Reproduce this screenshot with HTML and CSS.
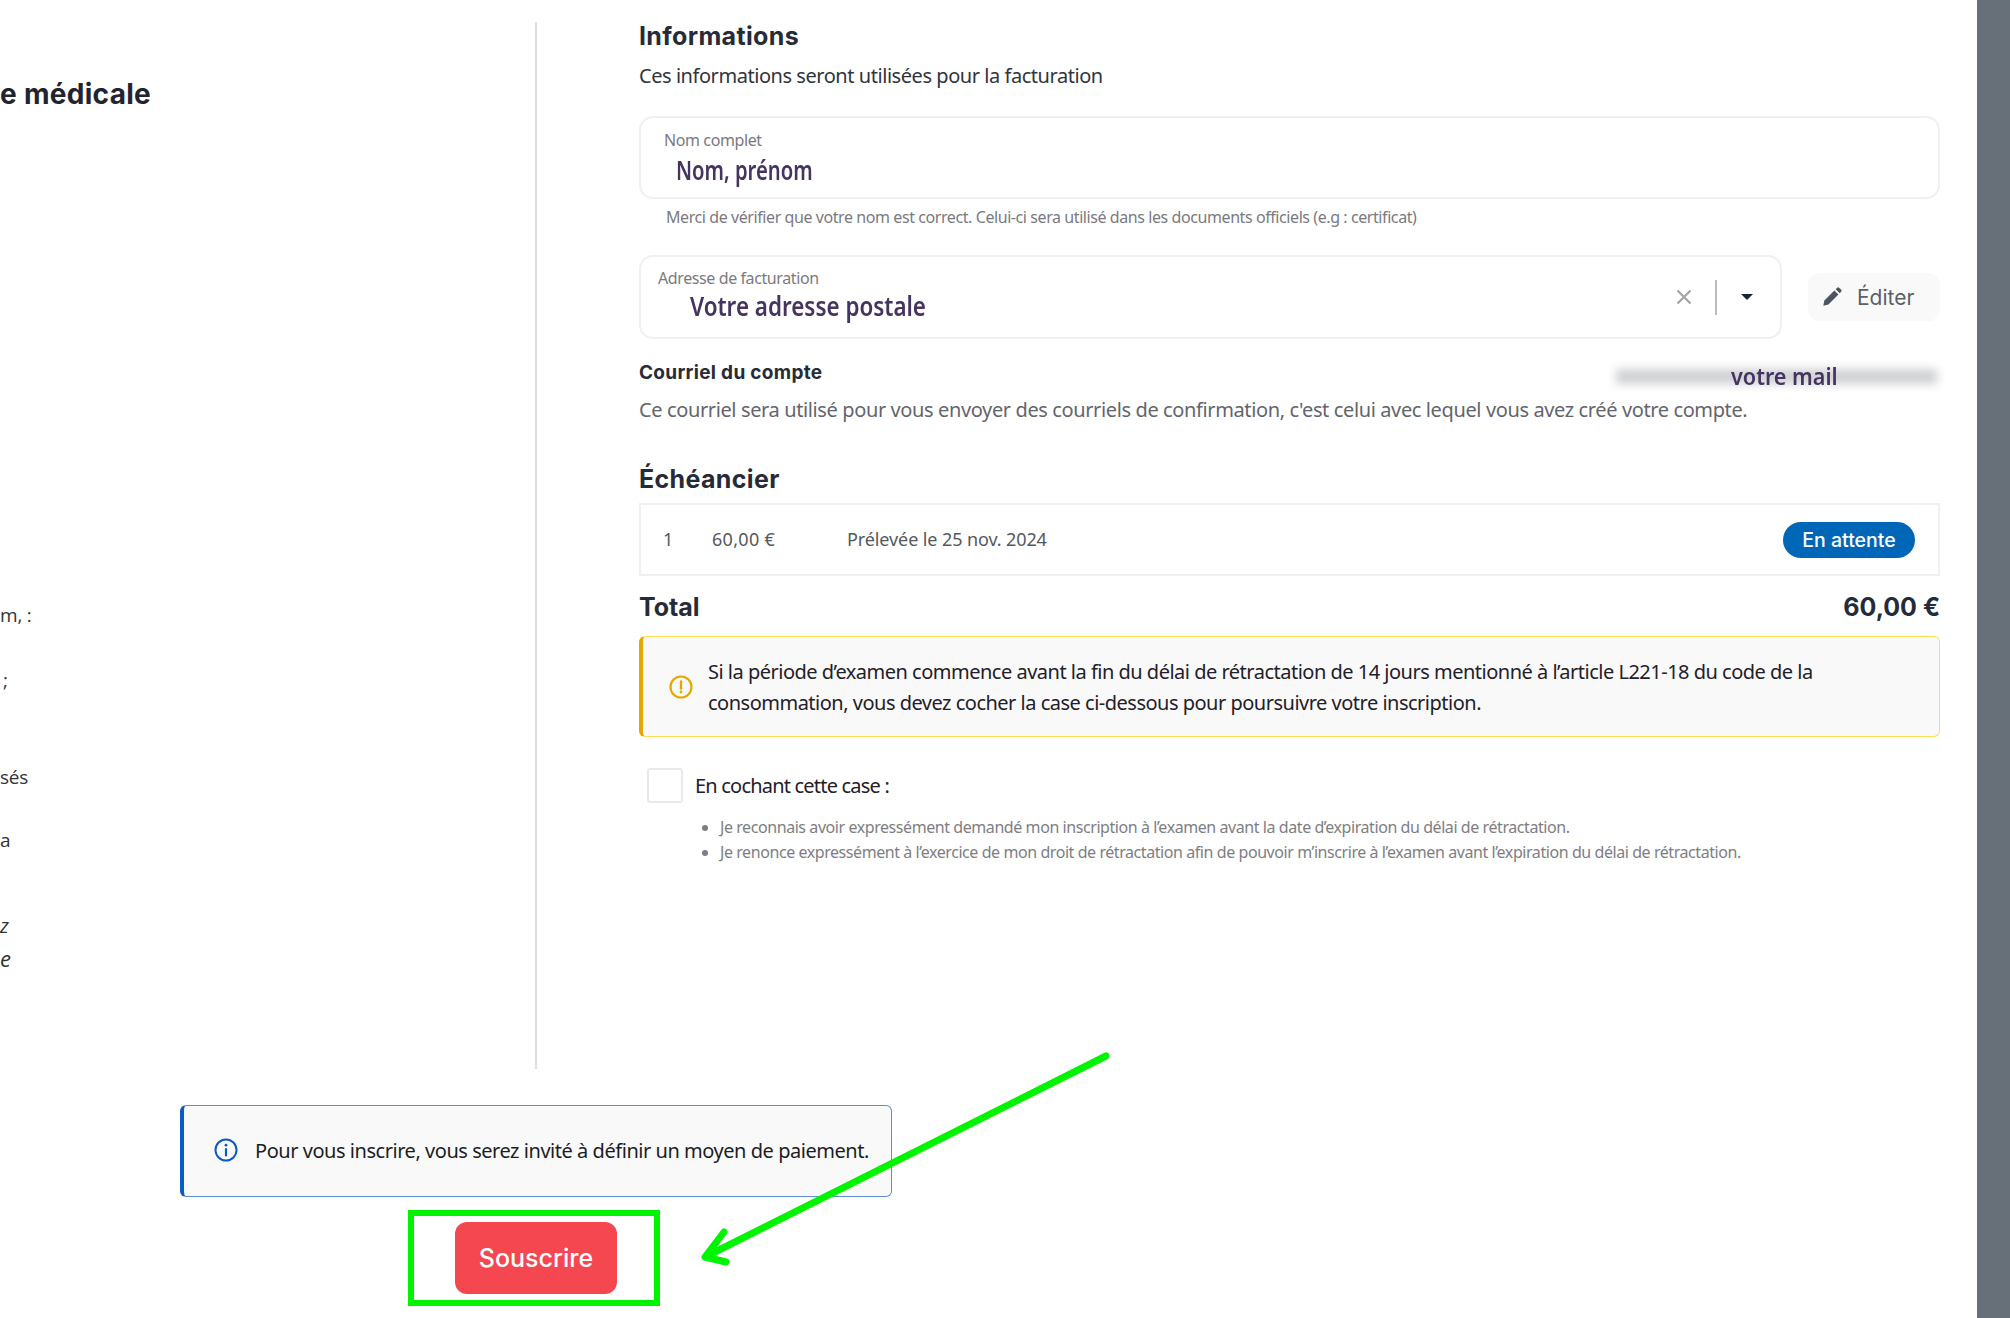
FILE: index.html
```html
<!DOCTYPE html>
<html lang="fr">
<head>
    <meta charset="UTF-8">
    <meta name="viewport" content="width=device-width, initial-scale=1.0">
    <title>Souscrire</title>
    <link rel="stylesheet" href="styles.css">
</head>
<body>
    <div class="page">
        <div class="columns">
            <div class="left-col">
                <h1 class="left-title">e médicale</h1>
                <p class="frag frag-1">m, :</p>
                <p class="frag frag-2">;</p>
                <p class="frag frag-3">sés</p>
                <p class="frag frag-4">a</p>
                <p class="frag frag-5"><em>z</em></p>
                <p class="frag frag-6"><em>e</em></p>
            </div>

            <div class="right-col">
                <h2 class="section-title">Informations</h2>
                <p class="subtitle">Ces informations seront utilisées pour la facturation</p>

                <div class="field field-name">
                    <div class="field-label">Nom complet</div>
                    <div class="hand-value value-name">Nom, prénom</div>
                </div>
                <p class="help">Merci de vérifier que votre nom est correct. Celui-ci sera utilisé dans les documents officiels (e.g : certificat)</p>

                <div class="address-row">
                    <div class="field field-address">
                        <div class="field-main">
                            <div class="field-label">Adresse de facturation</div>
                            <div class="hand-value value-address">Votre adresse postale</div>
                        </div>
                        <svg class="clear-icon" viewBox="0 0 16 16" width="16" height="16"><path d="M1.5 1.5l13 13M14.5 1.5l-13 13" stroke="#a6a7ab" stroke-width="2.4" fill="none"/></svg>
                        <span class="select-sep"></span>
                        <span class="caret"></span>
                    </div>
                    <button class="edit-btn">
                        <svg viewBox="0 0 24 24" width="22" height="22"><path d="M2.5 21.5l1.2-5.6L14.6 5l4.4 4.4L8.1 20.3z" fill="#4d5560"/><path d="M16 3.6l1.6-1.6a1.6 1.6 0 0 1 2.2 0l2.2 2.2a1.6 1.6 0 0 1 0 2.2L20.4 8z" fill="#4d5560"/></svg>
                        <span>Éditer</span>
                    </button>
                </div>

                <div class="account-row">
                    <strong class="account-title">Courriel du compte</strong>
                    <div class="account-mail">
                        <div class="mail-blur"></div>
                        <span class="hand-value mail-over">votre mail</span>
                    </div>
                </div>
                <p class="account-text">Ce courriel sera utilisé pour vous envoyer des courriels de confirmation, c'est celui avec lequel vous avez créé votre compte.</p>

                <h2 class="section-title schedule-title">Échéancier</h2>
                <div class="schedule">
                    <span class="sch-num">1</span>
                    <span class="sch-amount">60,00 €</span>
                    <span class="sch-date">Prélevée le 25 nov. 2024</span>
                    <span class="badge">En attente</span>
                </div>

                <div class="total-row">
                    <span>Total</span>
                    <span>60,00 €</span>
                </div>

                <div class="alert alert-warning">
                    <svg viewBox="0 0 24 24" width="24" height="24"><circle cx="12" cy="12" r="10.5" fill="none" stroke="#e5a800" stroke-width="2.2"/><path d="M12 6.5v7" stroke="#e5a800" stroke-width="2.4" stroke-linecap="round"/><circle cx="12" cy="17" r="1.4" fill="#e5a800"/></svg>
                    <p>Si la période d’examen commence avant la fin du délai de rétractation de 14 jours mentionné à l’article L221-18 du code de la consommation, vous devez cocher la case ci-dessous pour poursuivre votre inscription.</p>
                </div>

                <label class="check-row">
                    <span class="checkbox"></span>
                    <span>En cochant cette case :</span>
                </label>
                <ul class="check-list">
                    <li>Je reconnais avoir expressément demandé mon inscription à l’examen avant la date d’expiration du délai de rétractation.</li>
                    <li>Je renonce expressément à l’exercice de mon droit de rétractation afin de pouvoir m’inscrire à l’examen avant l’expiration du délai de rétractation.</li>
                </ul>
            </div>
        </div>

        <div class="footer">
            <div class="alert alert-info">
                <svg viewBox="0 0 24 24" width="24" height="24"><circle cx="12" cy="12" r="10.5" fill="none" stroke="#0a5cc4" stroke-width="2"/><path d="M12 11v6.5" stroke="#0a5cc4" stroke-width="2.2" stroke-linecap="round"/><circle cx="12" cy="7.2" r="1.4" fill="#0a5cc4"/></svg>
                <p>Pour vous inscrire, vous serez invité à définir un moyen de paiement.</p>
            </div>
            <div class="highlight">
                <button class="subscribe-btn">Souscrire</button>
            </div>
        </div>

        <svg class="arrow" viewBox="0 0 2010 1318" width="2010" height="1318">
            <path d="M1106 1056L707 1256M724 1232L705 1257L726 1262" fill="none" stroke="#00f400" stroke-width="7" stroke-linecap="round" stroke-linejoin="round"/>
        </svg>
    </div>
    <div class="side-bar"></div>
</body>
</html>
```

FILE: styles.css
```css
* {
    box-sizing: border-box;
}

html, body {
    height: 100%;
}

body {
    margin: 0;
    display: flex;
    overflow: hidden;
    background-color: #ffffff;
    color: #1f2028;
    font-family: "Noto Sans", "Open Sans", sans-serif;
    font-size: 20px;
    letter-spacing: -0.45px;
}

p, h1, h2, ul {
    margin: 0;
}

.page {
    flex: 1;
    padding-top: 22px;
}

.side-bar {
    width: 33px;
    background-color: #676f78;
}

.columns {
    display: flex;
    height: 1047px;
}

.left-col {
    width: 537px;
    border-right: 2px solid #dedede;
    overflow: hidden;
}

.left-title {
    margin-top: 57px;
    font-family: Inter, sans-serif;
    font-size: 28px;
    line-height: 30px;
    font-weight: 700;
    letter-spacing: 0.3px;
    color: #1f2430;
}

.frag {
    line-height: 28px;
    font-family: "Open Sans", sans-serif;
    font-size: 19px;
    letter-spacing: -0.2px;
    color: #333;
}

.frag-1 { margin-top: 492px; }
.frag-2 { margin-top: 37px; padding-left: 3px; }
.frag-3 { margin-top: 69px; }
.frag-4 { margin-top: 35px; }
.frag-5 { margin-top: 58px; font-size: 20px; }
.frag-6 { margin-top: 4px; font-size: 22px; }

.right-col {
    width: 1301px;
    margin-left: 102px;
}

.section-title {
    font-family: Inter, sans-serif;
    font-size: 25px;
    line-height: 28px;
    font-weight: 700;
    letter-spacing: 0.35px;
    color: #262b37;
}

.subtitle {
    margin-top: 12px;
    line-height: 28px;
    color: #30343c;
}

.field {
    border: 2px solid #f0f0f0;
    border-radius: 14px;
    background-color: #fff;
}

.field-name {
    margin-top: 26px;
    height: 83px;
    padding: 12px 23px 0;
}

.field-label {
    line-height: 20px;
    font-size: 16px;
    letter-spacing: -0.4px;
    color: #7a7a7e;
}

.hand-value {
    display: block;
    font-family: "Noto Sans", sans-serif;
    font-weight: 600;
    letter-spacing: 0;
    color: #45345f;
    transform-origin: left center;
}

.value-name {
    margin: 4px 0 0 12px;
    line-height: 32px;
    font-size: 27px;
    transform: scaleX(0.75);
}

.help {
    margin: 8px 0 0 27px;
    line-height: 20px;
    font-size: 16px;
    letter-spacing: -0.42px;
    color: #7a7a80;
}

.address-row {
    display: flex;
    align-items: center;
    justify-content: space-between;
    margin-top: 28px;
}

.field-address {
    display: flex;
    align-items: center;
    width: 1143px;
    height: 84px;
    padding: 0 0 0 17px;
}

.field-main {
    flex: 1;
    padding-bottom: 4px;
}

.value-address {
    margin: 2px 0 0 32px;
    line-height: 32px;
    font-size: 27px;
    transform: scaleX(0.83);
}

.clear-icon {
    margin-right: 23px;
}

.select-sep {
    width: 2px;
    height: 35px;
    background-color: #bcbcbc;
}

.caret {
    margin: 0 27px 0 24px;
    border-left: 6px solid transparent;
    border-right: 6px solid transparent;
    border-top: 6px solid #1b2230;
}

.edit-btn {
    display: flex;
    align-items: center;
    gap: 14px;
    width: 132px;
    height: 48px;
    padding: 0 0 0 13px;
    border: none;
    border-radius: 12px;
    background-color: #f9f9f9;
    color: #5b5f68;
    font-family: Inter, sans-serif;
    font-size: 21px;
}

.account-row {
    display: flex;
    justify-content: space-between;
    align-items: flex-start;
    margin-top: 21px;
    height: 24px;
}

.account-title {
    align-self: center;
    font-family: Inter, sans-serif;
    font-size: 19px;
    font-weight: 700;
    letter-spacing: 0.3px;
    color: #262b37;
}

.account-mail {
    position: relative;
    flex: none;
    width: 333px;
    height: 27px;
    margin: 3px -3px 0 0;
}

.mail-blur {
    height: 15px;
    margin: 6px 6px 0;
    background-color: #cfd0d3;
    filter: blur(5px);
}

.mail-over {
    position: absolute;
    top: -3px;
    left: 121px;
    font-size: 24px;
    line-height: 32px;
    transform: scaleX(0.9);
}

.account-text {
    margin-top: 12px;
    line-height: 28px;
    letter-spacing: -0.38px;
    color: #63656c;
}

.schedule-title {
    margin-top: 40px;
    line-height: 30px;
}

.schedule {
    display: flex;
    align-items: center;
    height: 73px;
    margin-top: 9px;
    padding: 0 23px 0 22px;
    border: 2px solid #f0f0f0;
    font-size: 18px;
    letter-spacing: -0.1px;
    color: #555860;
}

.sch-num {
    width: 49px;
    padding-bottom: 2px;
}

.sch-amount {
    width: 135px;
    padding-bottom: 2px;
    letter-spacing: 0.3px;
}

.sch-date {
    flex: 1;
    padding-bottom: 2px;
}

.badge {
    width: 132px;
    height: 36px;
    border-radius: 18px;
    background-color: #0067b8;
    color: #fff;
    font-family: Inter, sans-serif;
    font-size: 19.5px;
    font-weight: 500;
    letter-spacing: 0;
    line-height: 36px;
    text-align: center;
}

.total-row {
    display: flex;
    justify-content: space-between;
    margin-top: 16px;
    font-family: Inter, sans-serif;
    font-size: 25px;
    line-height: 30px;
    font-weight: 700;
    letter-spacing: 0;
    color: #262b37;
}

.alert {
    display: flex;
    align-items: center;
    background-color: #f9f9f9;
    border-radius: 6px;
}

.alert-warning {
    height: 101px;
    margin-top: 14px;
    padding-left: 26px;
    gap: 15px;
    border: 1px solid #ffdd55;
    border-left: 4px solid #e5a800;
    line-height: 31px;
    letter-spacing: -0.5px;
}

.alert-warning p {
    width: 1190px;
}

.check-row {
    display: flex;
    align-items: center;
    gap: 12px;
    margin: 31px 0 0 8px;
    height: 35px;
    letter-spacing: -0.8px;
}

.checkbox {
    width: 36px;
    height: 35px;
    border: 2px solid #e9e9e9;
    border-radius: 3px;
}

.check-list {
    margin-top: 12px;
    padding-left: 81px;
    font-size: 16px;
    letter-spacing: -0.43px;
    line-height: 25px;
    color: #7e7e82;
}

.footer {
    display: flex;
    flex-direction: column;
    align-items: center;
    width: 1072px;
    padding-top: 36px;
}

.alert-info {
    width: 712px;
    height: 92px;
    padding: 0 0 2px 30px;
    gap: 17px;
    border: 1px solid #5b8fd8;
    border-left: 4px solid #0a5cc4;
    letter-spacing: -0.46px;
    color: #1c1d24;
}

.highlight {
    display: flex;
    align-items: center;
    justify-content: center;
    width: 252px;
    height: 96px;
    margin: 13px 4px 0 0;
    padding-left: 4px;
    border: 6px solid #00f400;
}

.subscribe-btn {
    flex: none;
    width: 162px;
    height: 72px;
    border: none;
    border-radius: 12px;
    background-color: #f4474f;
    color: #fff;
    font-family: Inter, sans-serif;
    font-size: 25px;
    font-weight: 500;
}

.arrow {
    position: absolute;
    top: 0;
    left: 0;
    pointer-events: none;
}
```
